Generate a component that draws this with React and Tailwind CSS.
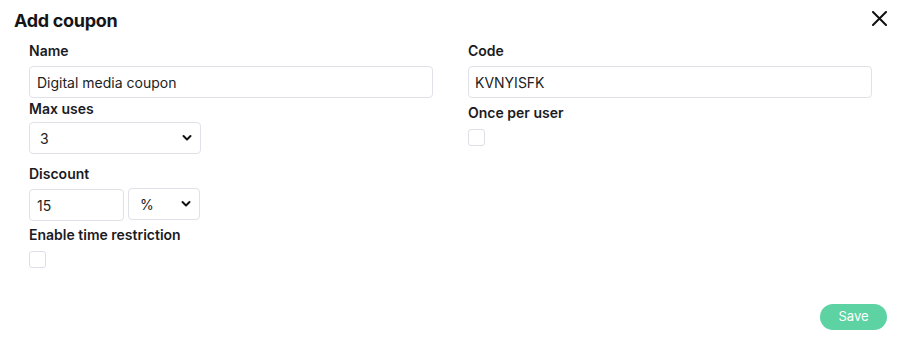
import React, { useState } from "react";

const font = { fontFamily: "Inter, 'Noto Sans', sans-serif" };

function Chevron() {
  return (
    <svg width="10" height="7" viewBox="0 0 10 7" className="pointer-events-none absolute right-[9px] top-1/2 -translate-y-1/2">
      <path d="M1.5 1.5 5 5l3.5-3.5" fill="none" stroke="#111" strokeWidth="2" strokeLinecap="round" strokeLinejoin="round" />
    </svg>
  );
}

function Label({ children, className = "" }) {
  return <div className={`text-[14px] leading-[20px] font-semibold text-[#1b1b1f] ${className}`}>{children}</div>;
}

export default function App() {
  const [name, setName] = useState("Digital media coupon");
  const [code, setCode] = useState("KVNYISFK");
  const [discount, setDiscount] = useState("15");

  const box = "h-[32px] rounded-[4px] border border-[#e1e1e8] bg-white text-[14px] text-[#222] outline-none";

  return (
    <div className="w-[900px] h-[347px] bg-white relative" style={font}>
      <div className="flex items-start justify-between pl-[14px] pr-[13px] pt-[9px]">
        <h1 className="text-[18px] leading-[24px] font-bold text-[#151518] tracking-[-0.3px]">Add coupon</h1>
        <button type="button" className="mt-[2px] p-0">
          <svg width="15" height="15" viewBox="0 0 15 15">
            <path d="M1 1l13 13M14 1 1 14" stroke="#111" strokeWidth="2" strokeLinecap="round" />
          </svg>
        </button>
      </div>

      <div className="grid grid-cols-2 gap-x-[35px] pl-[29px] pr-[28px] mt-[8px]">
        <div className="flex flex-col">
          <Label>Name</Label>
          <input value={name} onChange={(e) => setName(e.target.value)} className={`${box} mt-[5px] w-full px-[7px]`} />
          <Label className="mt-[1px]">Max uses</Label>
          <div className="relative mt-[3px] w-[172px]">
            <select className={`${box} appearance-none w-full h-[31px] pl-[10px]`} defaultValue="3">
              <option>1</option>
              <option>2</option>
              <option>3</option>
              <option>Unlimited</option>
            </select>
            <Chevron />
          </div>
          <Label className="mt-[10px]">Discount</Label>
          <div className="flex items-start gap-[4px] mt-[4px]">
            <input value={discount} onChange={(e) => setDiscount(e.target.value)} className={`${box} mt-[1px] w-[95px] px-[7px]`} />
            <div className="relative w-[72px]">
              <select className={`${box} appearance-none w-full h-[31px] pl-[11px]`} defaultValue="%">
                <option>%</option>
                <option>$</option>
              </select>
              <Chevron />
            </div>
          </div>
          <Label className="mt-[4px]">Enable time restriction</Label>
          <div className="mt-[6px] w-[17px] h-[17px] rounded-[3px] border border-[#dedee6] bg-white" />
        </div>

        <div className="flex flex-col">
          <Label>Code</Label>
          <input value={code} onChange={(e) => setCode(e.target.value)} className={`${box} mt-[5px] w-full px-[6px]`} />
          <Label className="mt-[5px]">Once per user</Label>
          <div className="mt-[6px] w-[17px] h-[17px] rounded-[3px] border border-[#dedee6] bg-white" />
        </div>
      </div>

      <div className="absolute right-[13px] bottom-[17px]">
        <button type="button" className="h-[26px] w-[67px] rounded-full bg-[#5dd3a4] text-white text-[13px] font-normal">
          Save
        </button>
      </div>
    </div>
  );
}
